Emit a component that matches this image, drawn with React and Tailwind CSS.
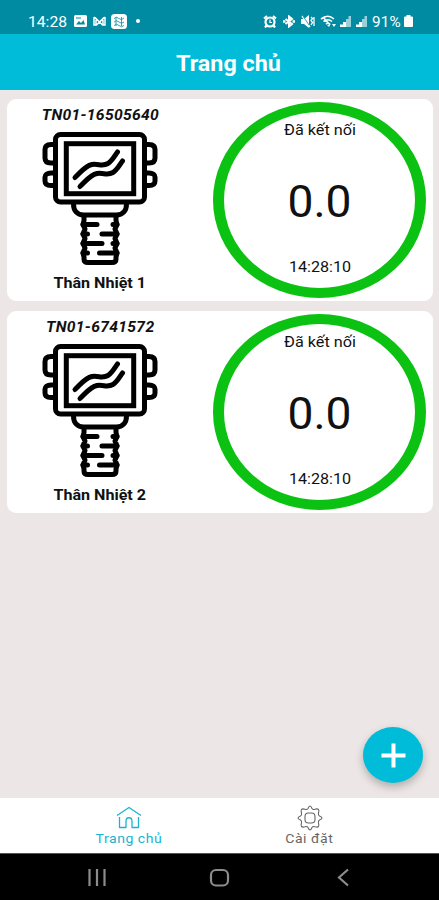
const devices = [
  { id: 'TN01-16505640', name: 'Thân Nhiệt 1', status: 'Đã kết nối', value: '0.0', time: '14:28:10' },
  { id: 'TN01-6741572', name: 'Thân Nhiệt 2', status: 'Đã kết nối', value: '0.0', time: '14:28:10' },
]

function DeviceIcon() {
  return (
    <svg width="116" height="134" viewBox="0 0 116 134" fill="none" stroke="#000" strokeWidth="5" strokeLinecap="round" strokeLinejoin="round">
      <rect x="13.5" y="3.5" width="89" height="67.5" rx="5" />
      <rect x="24.3" y="12.7" width="67.4" height="50" strokeLinejoin="miter" />
      <path d="M13.5 13.500H9C5 13.500 3 15.500 3 18.500v8.500c0 3 2 5 6 5h4.500M13.500 42H9c-4 0-6 2-6 4v4c0 3 2 4.500 6 4.500h4.500" />
      <path d="M102.500 13.500h4.500c4 0 6 2 6 5v8.500c0 3-2 5-6 5h-4.500M102.500 42h4.500c4 0 6 2 6 4v4c0 3-2 4.500-6 4.500h-4.500" />
      <path d="M33 46.500C39 41 43 35 50 33.500C57 32.500 60 36 66 32.500C70 30 72.500 25 75.500 21" />
      <path d="M38 55.500C44 50 48 44 55 42.500C62 41.500 65 45 71 41.500C75 39 77.500 34 80.500 30" />
      <path d="M31.500 73c0 7 4 11 10 11h33c6 0 10-4 10-11" />
      <path d="M42 86v3.500l-1 4l2 4.500l-2 5l2 4.500l-2 5l2 4.500l-2 5l1 4v2c0 2.500 1.500 3.500 4 3.500h24c2.500 0 4-1 4-3.500v-2l1-4l-2-5l2-4.500l-2-5l2-4.500l-2-5l2-4.500l-1-4v-3.500" />
      <path d="M41 93.500h14M71 93.500h4M41 103h4.500M60 103h15M41 112.500h19M71 112.500h4M41 122h4.500M57.500 122h17.500" />
    </svg>
  )
}

function DeviceCard({ device }) {
  return (
    <div className="flex h-[202px] rounded-[9px] bg-white">
      <div className="flex w-[186px] flex-col items-center pt-[8px]">
        <p className="h-[18px] scale-x-[1.08] text-[14.5px] leading-[18px] font-bold italic tracking-[0.3px] whitespace-nowrap">{device.id}</p>
        <div className="mt-[6px] h-[134px]">
          <DeviceIcon />
        </div>
        <p className="mt-[10px] scale-x-[1.11] text-[14.5px] leading-[18px] font-bold whitespace-nowrap">{device.name}</p>
      </div>
      <div className="ml-5 mt-[3px] flex h-[196px] w-[213px] flex-col items-center rounded-[50%] border-x-[11px] border-y-[10px] border-[#0bc212] text-[14px]">
        <p className="mt-2 ml-[1px] scale-x-[1.16] leading-[20px] whitespace-nowrap">{device.status}</p>
        <p className="mt-[35px] scale-x-[1.05] text-[44px] leading-[54px] whitespace-nowrap">{device.value}</p>
        <p className="mt-[28px] scale-x-[1.15] leading-[20px] whitespace-nowrap">{device.time}</p>
      </div>
    </div>
  )
}

function SignalIcon() {
  return (
    <svg width="12" height="12" viewBox="0 0 12 12" fill="#fff">
      <path d="M0 9.500h3V12H0zM3 7h3v5H3z" />
      <path d="M6 4h2.500v8H6zM8.500 1H11v11H8.500z" fillOpacity="0.6" />
    </svg>
  )
}

function StatusBar() {
  return (
    <div className="flex h-[34px] items-center justify-between bg-[#008ba3] pt-2 pr-[26px] pl-[28px] text-[14px] leading-none text-white">
      <div className="flex items-center">
        <span className="w-[46px] scale-x-[1.12] origin-left pt-px whitespace-nowrap">14:28</span>
        <svg width="13" height="12" viewBox="0 0 13 12">
          <rect width="13" height="12" rx="1.500" fill="#fff" />
          <path d="M2 9.500L5 6l2 2l2.500-3L11 9.500z" fill="#008ba3" />
          <path d="M2 2.500h5v1H2z" fill="#008ba3" />
        </svg>
        <svg className="ml-[6px]" width="13" height="10" viewBox="0 0 13 10" fill="none" stroke="#fff" strokeWidth="1.500">
          <path d="M1 1v8h2V2.500L6.500 6L10 2.500V9h2V1M1 1l5.500 5L12 1M3.500 9L6.500 6l3 3" />
        </svg>
        <svg className="ml-[5px]" width="16" height="15" viewBox="0 0 16 15">
          <rect width="16" height="15" rx="3.500" fill="#fff" />
          <path d="M3 4.500Q5.500 2 8 4.500T13 4M3 8Q5.500 5.500 8 8t5 0M3 11.500Q5.500 9 8 11.500t5 0M5 3v9M10.500 3v9" fill="none" stroke="#008ba3" strokeWidth="0.800" />
        </svg>
        <span className="ml-[9px] size-[4px] rounded-full bg-white" />
      </div>
      <div className="flex items-center">
        <svg width="14" height="13" viewBox="0 0 14 13" fill="none" stroke="#fff" strokeWidth="2.200">
          <circle cx="7" cy="7" r="4.500" />
          <path d="M1 3.500L4 1M13 3.500L10 1M3.500 10.500L2 12.500M10.500 10.500L12 12.500" />
          <path d="M7 4.500V7.500H9" strokeWidth="1.200" />
        </svg>
        <svg className="ml-[6px]" width="12" height="13" viewBox="0 0 12 13" fill="none" stroke="#fff" strokeWidth="2">
          <path d="M2.500 4L9 9L6 11.500V1.500L9 4L2.500 9" />
          <path d="M0 6.500h2.500M9.500 6.500h2.500" strokeWidth="2.400" />
        </svg>
        <svg className="ml-[6px]" width="14" height="13" viewBox="0 0 14 13">
          <path d="M0 4h3l5-4v13L3 9H0z" fill="#fff" />
          <path d="M1 1l8 11M10 2l1.500 1.500L10 5.500l1.500 2L10 10M13 2v9" fill="none" stroke="#fff" strokeWidth="1.300" />
          <path d="M2 1l6 9" fill="none" stroke="#008ba3" strokeWidth="0.800" />
        </svg>
        <svg className="ml-[5px]" width="16" height="13" viewBox="0 0 16 13" fill="none" stroke="#fff" strokeWidth="1.600">
          <path d="M1 4Q8-1.500 14 4M3.500 6.500Q8 3 12 6.500M6 9Q8 7.500 10 9M3 2l7 8" />
          <path d="M12 9h4l-2 3zM7 10h3l-1 2z" fill="#fff" stroke="none" />
        </svg>
        <span className="ml-[4px] flex gap-[4px]">
          <SignalIcon />
          <SignalIcon />
        </span>
        <span className="ml-[4px] w-[32px] scale-x-[1.09] origin-left pt-px tracking-[0.2px] whitespace-nowrap">91%</span>
        <svg width="9" height="12" viewBox="0 0 9 12" fill="#fff">
          <path d="M2.500 0h4v1.500H8q1 0 1 1V11q0 1-1 1H1q-1 0-1-1V2.500q0-1 1-1h1.500z" />
        </svg>
      </div>
    </div>
  )
}

function BottomNav() {
  return (
    <nav className="flex h-[55px] bg-white px-[40px] text-[13px] leading-[16px]">
      <div className="flex flex-1 flex-col items-center pt-[8px] text-[#19b5d0]">
        <svg width="26" height="24" viewBox="0 0 26 24" fill="none" stroke="currentColor" strokeWidth="1.300" strokeLinejoin="round">
          <path d="M1 9.500L13 1.500l12 8M3.500 11v10.500H10v-6c0-5 6-5 6 0v6h6.500V11" />
        </svg>
        <span className="mt-[1px] scale-x-[1.08] tracking-[0.5px] whitespace-nowrap">Trang chủ</span>
      </div>
      <div className="flex flex-1 flex-col items-center pt-[7px] pl-[2px] text-[#666]">
        <svg width="26" height="26" viewBox="0 0 26 26" fill="none" stroke="currentColor" strokeWidth="1.100" strokeLinejoin="round">
          <path d="M13 1Q14 1 15 3.500Q16 5 18 4.200Q20.500 3.500 21.500 4.500Q22.300 5.500 21.500 8Q21 10 22.500 11Q25 12 25 13T22.500 15Q21 16 21.500 18Q22.300 20.500 21.500 21.500Q20.500 22.500 18 21.800Q16 21 15 22.500Q14 25 13 25T11 22.500Q10 21 8 21.800Q5.500 22.500 4.500 21.500Q3.700 20.500 4.500 18Q5 16 3.500 15Q1 14 1 13T3.500 11Q5 10 4.500 8Q3.700 5.500 4.500 4.500Q5.500 3.500 8 4.200Q10 5 11 3.500Q12 1 13 1Z" />
          <rect x="8" y="8" width="10" height="10" rx="3.500" />
        </svg>
        <span className="scale-x-[1.08] tracking-[0.5px] whitespace-nowrap">Cài đặt</span>
      </div>
    </nav>
  )
}

export default function App() {
  return (
    <div className="flex h-[900px] w-[439px] flex-col overflow-hidden bg-[#ece6e6] font-['Roboto',sans-serif] text-[#111]">
      <StatusBar />
      <header className="flex h-[56px] items-center justify-center bg-[#00bcd8] pt-[2px] pl-[18px] text-[22px] font-bold text-white">
        <h1 className="scale-x-[1.06] whitespace-nowrap">Trang chủ</h1>
      </header>
      <main className="relative flex flex-1 flex-col gap-[10px] pt-[9px] pr-[6px] pl-[7px]">
        {devices.map(d => (
          <DeviceCard key={d.id} device={d} />
        ))}
        <button className="absolute right-[16px] bottom-[15px] flex h-[56px] w-[60px] items-center justify-center rounded-[50%] bg-[#00bcd8] shadow-[0_4px_8px_rgba(0,0,0,0.25)]">
          <svg width="25" height="25" viewBox="0 0 25 25" stroke="#fff" strokeWidth="4">
            <path d="M0.500 12.500h24M12.500 0.500v24" />
          </svg>
        </button>
      </main>
      <BottomNav />
      <div className="h-[47px] border-t border-[#555] bg-black">
        <svg width="439" height="46" viewBox="0 854 439 46" fill="none" stroke="#8c8c8c" strokeWidth="2.200">
          <path d="M89.500 869v17M97 869v17M104.500 869v17" />
          <rect x="211" y="870" width="17" height="15.500" rx="5" />
          <path d="M348 869.500L339 877.500L348 885.500" />
        </svg>
      </div>
    </div>
  )
}
